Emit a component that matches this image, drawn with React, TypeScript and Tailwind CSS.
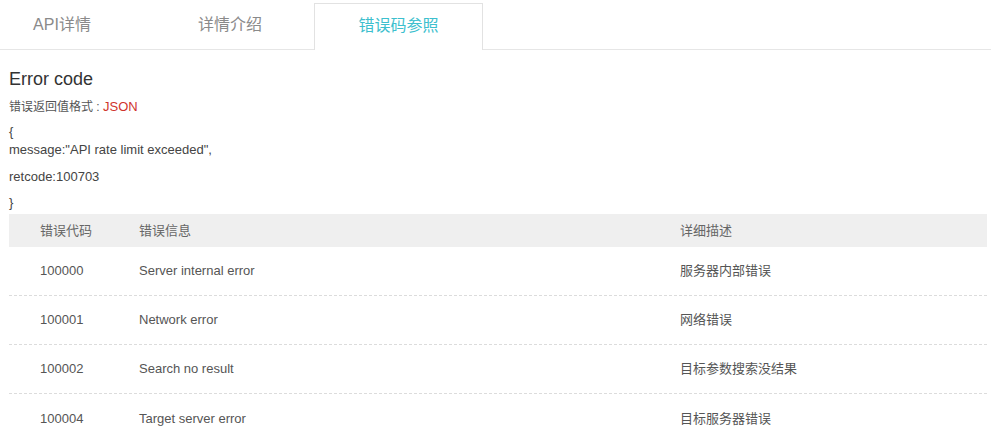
import React from 'react';

const rows = [
  { code: '100000', msg: 'Server internal error', desc: '服务器内部错误' },
  { code: '100001', msg: 'Network error', desc: '网络错误' },
  { code: '100002', msg: 'Search no result', desc: '目标参数搜索没结果' },
  { code: '100004', msg: 'Target server error', desc: '目标服务器错误' },
];

const tabs = ['API详情', '详情介绍', '错误码参照'];

export default function App() {
  return (
    <div
      className="w-[991px] h-[439px] overflow-hidden bg-white text-[#555]"
      style={{ fontFamily: '"Liberation Sans", "Noto Sans CJK SC", sans-serif' }}
    >
      {/* tabs */}
      <div className="h-[50px] border-b border-[#e6e6e6] flex items-end">
        <div className="flex -ml-[22px] h-[46px]">
          {tabs.map((t, i) => {
            const active = i === 2;
            return (
              <div
                key={t}
                className={
                  active
                    ? 'w-[169px] h-[47px] -mb-px bg-white border border-b-0 border-[#e2e2e2] flex items-center justify-center text-[16px] text-[#3cbfce] pb-[2px]'
                    : 'w-[168px] flex items-center justify-center text-[16px] text-[#8a8a8a] pb-[2px]'
                }
              >
                {t}
              </div>
            );
          })}
        </div>
      </div>

      <div className="pl-[9px] pr-[4px]">
        <h2 className="mt-[17px] text-[18px] leading-[24px] text-[#333]">Error code</h2>
        <p className="mt-[6px] text-[12px] leading-[20px] text-[#555]">
          错误返回值格式 : <span className="text-[#d0342c] text-[13px]">JSON</span>
        </p>

        <div className="mt-[6px] text-[13px] text-[#444]">
          <p className="leading-[18px]">{'{'}</p>
          <p className="leading-[18px]">message:"API rate limit exceeded",</p>
          <p className="leading-[18px] mt-[9px]">retcode:100703</p>
          <p className="leading-[18px] mt-[8px]">{'}'}</p>
        </div>

        {/* table */}
        <div className="mt-[2px] text-[13px]">
          <div className="grid grid-cols-[130px_541px_1fr] h-[33px] items-center bg-[#efefef] text-[#666]">
            <div className="pl-[31px]">错误代码</div>
            <div>错误信息</div>
            <div>详细描述</div>
          </div>
          {rows.map((r, i) => (
            <div
              key={r.code}
              className={
                'grid grid-cols-[130px_541px_1fr] h-[49px] items-center text-[#555]' +
                (i < rows.length - 1 ? ' border-b border-dashed border-[#dcdcdc]' : '')
              }
            >
              <div className="pl-[31px]">{r.code}</div>
              <div>{r.msg}</div>
              <div>{r.desc}</div>
            </div>
          ))}
        </div>
      </div>
    </div>
  );
}
